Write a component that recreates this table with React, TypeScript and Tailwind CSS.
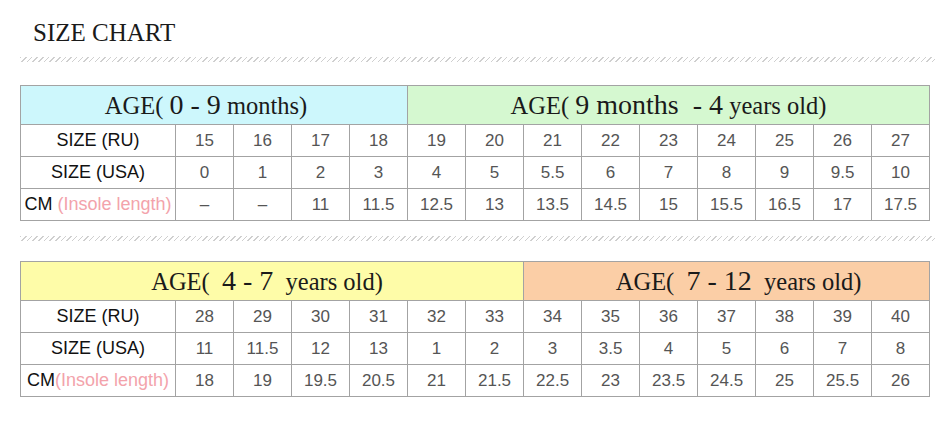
type Block = {
  heads: { span: number; bg: string; pad: string; content: React.ReactNode }[];
  ru: string[];
  usa: string[];
  cm: string[];
  cmSpace: boolean;
};

const Big = ({ children }: { children: React.ReactNode }) => (
  <span className="text-[28px]">{children}</span>
);

const BLOCKS: Block[] = [
  {
    heads: [
      {
        span: 5,
        bg: "bg-[#cdf7fc]",
        pad: "pr-[16px]",
        content: (
          <>
            AGE( <Big>0 - 9</Big> months)
          </>
        ),
      },
      {
        span: 9,
        bg: "bg-[#d5f8d0]",
        pad: "",
        content: (
          <>
            AGE( <Big>9 months&nbsp; - 4</Big> years old)
          </>
        ),
      },
    ],
    ru: ["15", "16", "17", "18", "19", "20", "21", "22", "23", "24", "25", "26", "27"],
    usa: ["0", "1", "2", "3", "4", "5", "5.5", "6", "7", "8", "9", "9.5", "10"],
    cm: ["–", "–", "11", "11.5", "12.5", "13", "13.5", "14.5", "15", "15.5", "16.5", "17", "17.5"],
    cmSpace: true,
  },
  {
    heads: [
      {
        span: 7,
        bg: "bg-[#fefca8]",
        pad: "pr-[10px]",
        content: (
          <>
            AGE(&nbsp; <Big>4 - 7</Big>&nbsp; years old)
          </>
        ),
      },
      {
        span: 7,
        bg: "bg-[#fbcea6]",
        pad: "pl-[24px]",
        content: (
          <>
            AGE(&nbsp; <Big>7 - 12</Big>&nbsp; years old)
          </>
        ),
      },
    ],
    ru: ["28", "29", "30", "31", "32", "33", "34", "35", "36", "37", "38", "39", "40"],
    usa: ["11", "11.5", "12", "13", "1", "2", "3", "3.5", "4", "5", "6", "7", "8"],
    cm: ["18", "19", "19.5", "20.5", "21", "21.5", "22.5", "23", "23.5", "24.5", "25", "25.5", "26"],
    cmSpace: false,
  },
];

function Stripes() {
  return (
    <div className="h-[5px] w-[915px] bg-[repeating-linear-gradient(135deg,#cfcfcf_0px,#cfcfcf_1px,transparent_1px,transparent_4px)]" />
  );
}

function Row({ label, values }: { label: React.ReactNode; values: string[] }) {
  return (
    <tr className="h-[32px]">
      <td className="whitespace-nowrap border border-[#a3a3a3] p-0 text-center text-[18px] text-[#111]">{label}</td>
      {values.map((v, i) => (
        <td key={i} className="border border-[#a3a3a3] p-0 text-center text-[17px] text-[#555]">
          {v}
        </td>
      ))}
    </tr>
  );
}

function SizeTable({ b }: { b: Block }) {
  return (
    <table className="w-[910px] table-fixed border-collapse font-['Liberation_Sans',Arial,sans-serif]">
      <colgroup>
        <col className="w-[155px]" />
        {b.ru.map((_, i) => (
          <col key={i} className="w-[58px]" />
        ))}
      </colgroup>
      <tbody>
        <tr className="h-[39px]">
          {b.heads.map((h, i) => (
            <td
              key={i}
              colSpan={h.span}
              className={`${h.bg} ${h.pad} border border-[#a3a3a3] py-0 text-center font-['Liberation_Serif','Times_New_Roman',serif] text-[24.5px] leading-[30px] text-[#1a1a1a]`}
            >
              {h.content}
            </td>
          ))}
        </tr>
        <Row label="SIZE (RU)" values={b.ru} />
        <Row label="SIZE (USA)" values={b.usa} />
        <Row
          label={
            <>
              CM{b.cmSpace ? " " : ""}
              <span className="text-[#f3a3ab]">(Insole length)</span>
            </>
          }
          values={b.cm}
        />
      </tbody>
    </table>
  );
}

export default function App() {
  return (
    <div className="h-[432px] w-[950px] bg-white px-[20px]">
      <div className="pl-[13px] pt-[19px] font-['Liberation_Serif','Times_New_Roman',serif] text-[25px] leading-[28px] text-[#1a1a1a]">
        SIZE CHART
      </div>
      <div className="mt-[10px]">
        <Stripes />
      </div>
      <div className="mt-[23px]">
        <SizeTable b={BLOCKS[0]} />
      </div>
      <div className="mt-[15px]">
        <Stripes />
      </div>
      <div className="mt-[20px]">
        <SizeTable b={BLOCKS[1]} />
      </div>
    </div>
  );
}
